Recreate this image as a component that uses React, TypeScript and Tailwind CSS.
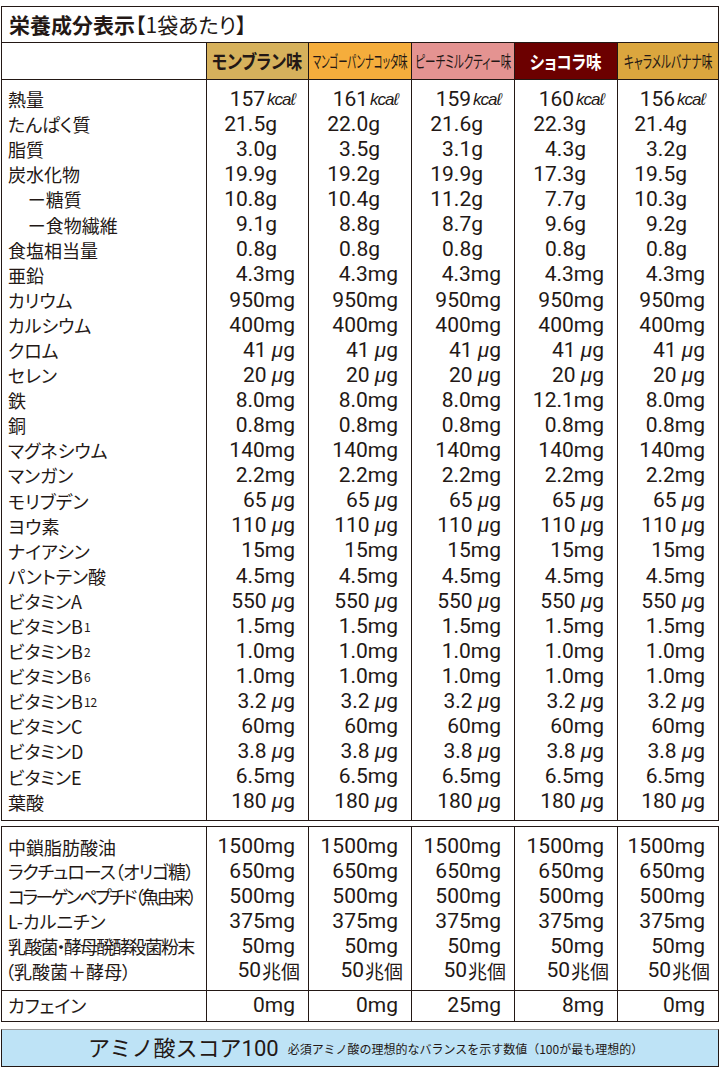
import type { ReactNode } from 'react';

type Unit = 'kcal' | 'g' | 'mg' | 'ug' | 'cho';
type Val = [string, Unit];

const ink = 'text-[#231815]';
const line = 'border-[#231815]';
const cols = 'grid grid-cols-[204px_102px_103px_103px_103px_1fr]';
const jp = "font-['Noto_Sans_CJK_JP',sans-serif] [font-feature-settings:'palt']";
const num = "font-['Roboto','Noto_Sans_CJK_JP',sans-serif]";

const same = (n: string, u: Unit): Val[] => [[n, u], [n, u], [n, u], [n, u], [n, u]];

const Sub = ({ children }: { children: ReactNode }) => (
  <span className="text-[12px] ml-[1px]">{children}</span>
);

const rows1: { label: ReactNode; vals: Val[]; indent?: boolean }[] = [
  { label: '熱量', vals: [['157', 'kcal'], ['161', 'kcal'], ['159', 'kcal'], ['160', 'kcal'], ['156', 'kcal']] },
  { label: 'たんぱく質', vals: [['21.5', 'g'], ['22.0', 'g'], ['21.6', 'g'], ['22.3', 'g'], ['21.4', 'g']] },
  { label: '脂質', vals: [['3.0', 'g'], ['3.5', 'g'], ['3.1', 'g'], ['4.3', 'g'], ['3.2', 'g']] },
  { label: '炭水化物', vals: [['19.9', 'g'], ['19.2', 'g'], ['19.9', 'g'], ['17.3', 'g'], ['19.5', 'g']] },
  { label: 'ー糖質', indent: true, vals: [['10.8', 'g'], ['10.4', 'g'], ['11.2', 'g'], ['7.7', 'g'], ['10.3', 'g']] },
  { label: 'ー食物繊維', indent: true, vals: [['9.1', 'g'], ['8.8', 'g'], ['8.7', 'g'], ['9.6', 'g'], ['9.2', 'g']] },
  { label: '食塩相当量', vals: same('0.8', 'g') },
  { label: '亜鉛', vals: same('4.3', 'mg') },
  { label: 'カリウム', vals: same('950', 'mg') },
  { label: 'カルシウム', vals: same('400', 'mg') },
  { label: 'クロム', vals: same('41', 'ug') },
  { label: 'セレン', vals: same('20', 'ug') },
  { label: '鉄', vals: [['8.0', 'mg'], ['8.0', 'mg'], ['8.0', 'mg'], ['12.1', 'mg'], ['8.0', 'mg']] },
  { label: '銅', vals: same('0.8', 'mg') },
  { label: 'マグネシウム', vals: same('140', 'mg') },
  { label: 'マンガン', vals: same('2.2', 'mg') },
  { label: 'モリブデン', vals: same('65', 'ug') },
  { label: 'ヨウ素', vals: same('110', 'ug') },
  { label: 'ナイアシン', vals: same('15', 'mg') },
  { label: 'パントテン酸', vals: same('4.5', 'mg') },
  { label: 'ビタミンA', vals: same('550', 'ug') },
  { label: <>ビタミンB<Sub>1</Sub></>, vals: same('1.5', 'mg') },
  { label: <>ビタミンB<Sub>2</Sub></>, vals: same('1.0', 'mg') },
  { label: <>ビタミンB<Sub>6</Sub></>, vals: same('1.0', 'mg') },
  { label: <>ビタミンB<Sub>12</Sub></>, vals: same('3.2', 'ug') },
  { label: 'ビタミンC', vals: same('60', 'mg') },
  { label: 'ビタミンD', vals: same('3.8', 'ug') },
  { label: 'ビタミンE', vals: same('6.5', 'mg') },
  { label: '葉酸', vals: same('180', 'ug') },
];

const rows2: { label: ReactNode; vals: Val[]; cls?: string }[] = [
  { label: '中鎖脂肪酸油', vals: same('1500', 'mg') },
  { label: 'ラクチュロース（オリゴ糖）', vals: same('650', 'mg'), cls: 'tracking-[-1px]' },
  { label: 'コラーゲンペプチド（魚由来）', vals: same('500', 'mg'), cls: 'tracking-[-2.5px]' },
  { label: 'L-カルニチン', vals: same('375', 'mg') },
  { label: '乳酸菌・酵母醗酵殺菌粉末', vals: same('50', 'mg'), cls: 'tracking-[-1.8px]' },
  { label: '（乳酸菌＋酵母）', vals: same('50', 'cho'), cls: '-ml-[3px]' },
];

const flavors = [
  { name: 'モンブラン味', bg: 'bg-[#d6b15c]', text: 'text-[19px] font-bold scale-x-[0.85]' },
  { name: 'マンゴーパンナコッタ味', bg: 'bg-[#f5ad3c]', text: 'text-[17px] scale-x-[0.55]' },
  { name: 'ピーチミルクティー味', bg: 'bg-[#e49391]', text: 'text-[17px] scale-x-[0.62]' },
  { name: 'ショコラ味', bg: 'bg-[#6c0000] text-white', text: 'text-[18px] font-bold scale-x-[0.86]' },
  { name: 'キャラメルバナナ味', bg: 'bg-[#dba63e]', text: 'text-[17px] scale-x-[0.63]' },
];

function Value({ v, h }: { v: Val; h: string }) {
  const [n, u] = v;
  const pr = u === 'g' ? 'pr-[31px]' : u === 'cho' ? 'pr-[8px]' : 'pr-[13px]';
  return (
    <div className={`${h} flex items-center justify-end whitespace-nowrap text-[21px] ${pr}`}>
      <span>{n}</span>
      {u === 'kcal' && (
        <span className="ml-[2px] italic text-[17px] tracking-[-1px] font-['Liberation_Sans',sans-serif]">kcaℓ</span>
      )}
      {u === 'g' && <span>g</span>}
      {u === 'mg' && <span>mg</span>}
      {u === 'ug' && (
        <span className="ml-[5px]">
          <span className="italic">μ</span>g
        </span>
      )}
      {u === 'cho' && <span className={`${jp} text-[19px] ml-[1px]`}>兆個</span>}
    </div>
  );
}

export default function App() {
  return (
    <div className={`w-[720px] bg-white ${ink} pb-[20px]`}>
      {/* 栄養成分表 */}
      <div className={`ml-[1px] mt-[6px] w-[718px] border ${line}`}>
        <div className={`h-[36px] border-b ${line} flex items-center pl-[7px] text-[21px] ${jp}`}>
          <span className="font-bold">栄養成分表示</span>
          <span>【1袋あたり】</span>
        </div>
        <div className={`${cols} h-[37px] border-b ${line} ${jp}`}>
          <div />
          {flavors.map((f) => (
            <div key={f.name} className={`border-l ${line} ${f.bg} flex items-center justify-center overflow-hidden`}>
              <span className={`shrink-0 whitespace-nowrap ${f.text}`}>{f.name}</span>
            </div>
          ))}
        </div>
        <div className={cols}>
          <div className={`pt-[7px] pb-[5px] pl-[6px] text-[18px] ${jp}`}>
            {rows1.map((r, i) => (
              <div key={i} className={`h-[25.1px] flex items-center whitespace-nowrap ${r.indent ? 'pl-[20px]' : ''}`}>
                {r.label}
              </div>
            ))}
          </div>
          {[0, 1, 2, 3, 4].map((c) => (
            <div key={c} className={`border-l ${line} pt-[7px] pb-[5px] ${num}`}>
              {rows1.map((r, i) => (
                <Value key={i} v={r.vals[c]} h="h-[25.1px]" />
              ))}
            </div>
          ))}
        </div>
      </div>

      {/* 機能性素材 */}
      <div className={`ml-[1px] mt-[5px] w-[718px] border ${line}`}>
        <div className={cols}>
          <div className={`pt-[8px] pb-[6px] pl-[6px] text-[18px] ${jp}`}>
            {rows2.map((r, i) => (
              <div key={i} className={`h-[24.8px] flex items-center whitespace-nowrap ${r.cls ?? ''}`}>
                {r.label}
              </div>
            ))}
          </div>
          {[0, 1, 2, 3, 4].map((c) => (
            <div key={c} className={`border-l ${line} pt-[8px] pb-[6px] ${num}`}>
              {rows2.map((r, i) => (
                <Value key={i} v={r.vals[c]} h="h-[24.8px]" />
              ))}
            </div>
          ))}
        </div>
        <div className={`${cols} border-t ${line} h-[31px]`}>
          <div className={`pl-[6px] text-[18px] flex items-center ${jp}`}>カフェイン</div>
          {(['0', '0', '25', '8', '0'] as const).map((n, c) => (
            <div key={c} className={`border-l ${line} ${num}`}>
              <Value v={[n, 'mg']} h="h-[30px]" />
            </div>
          ))}
        </div>
      </div>

      {/* アミノ酸スコア */}
      <div className={`ml-[1px] mt-[7px] w-[718px] h-[38px] bg-[#bee3f6] border border-t-[#9a9a9a] ${line} flex items-center pl-[86px] font-['Noto_Sans_CJK_JP',sans-serif]`}>
        <span className="text-[22px] leading-none">
          アミノ酸スコア<span className="font-['Roboto',sans-serif]">100</span>
        </span>
        <span className="ml-[9px] text-[12px] leading-none mt-[3px]">
          必須アミノ酸の理想的なバランスを示す数値（100が最も理想的）
        </span>
      </div>
    </div>
  );
}
